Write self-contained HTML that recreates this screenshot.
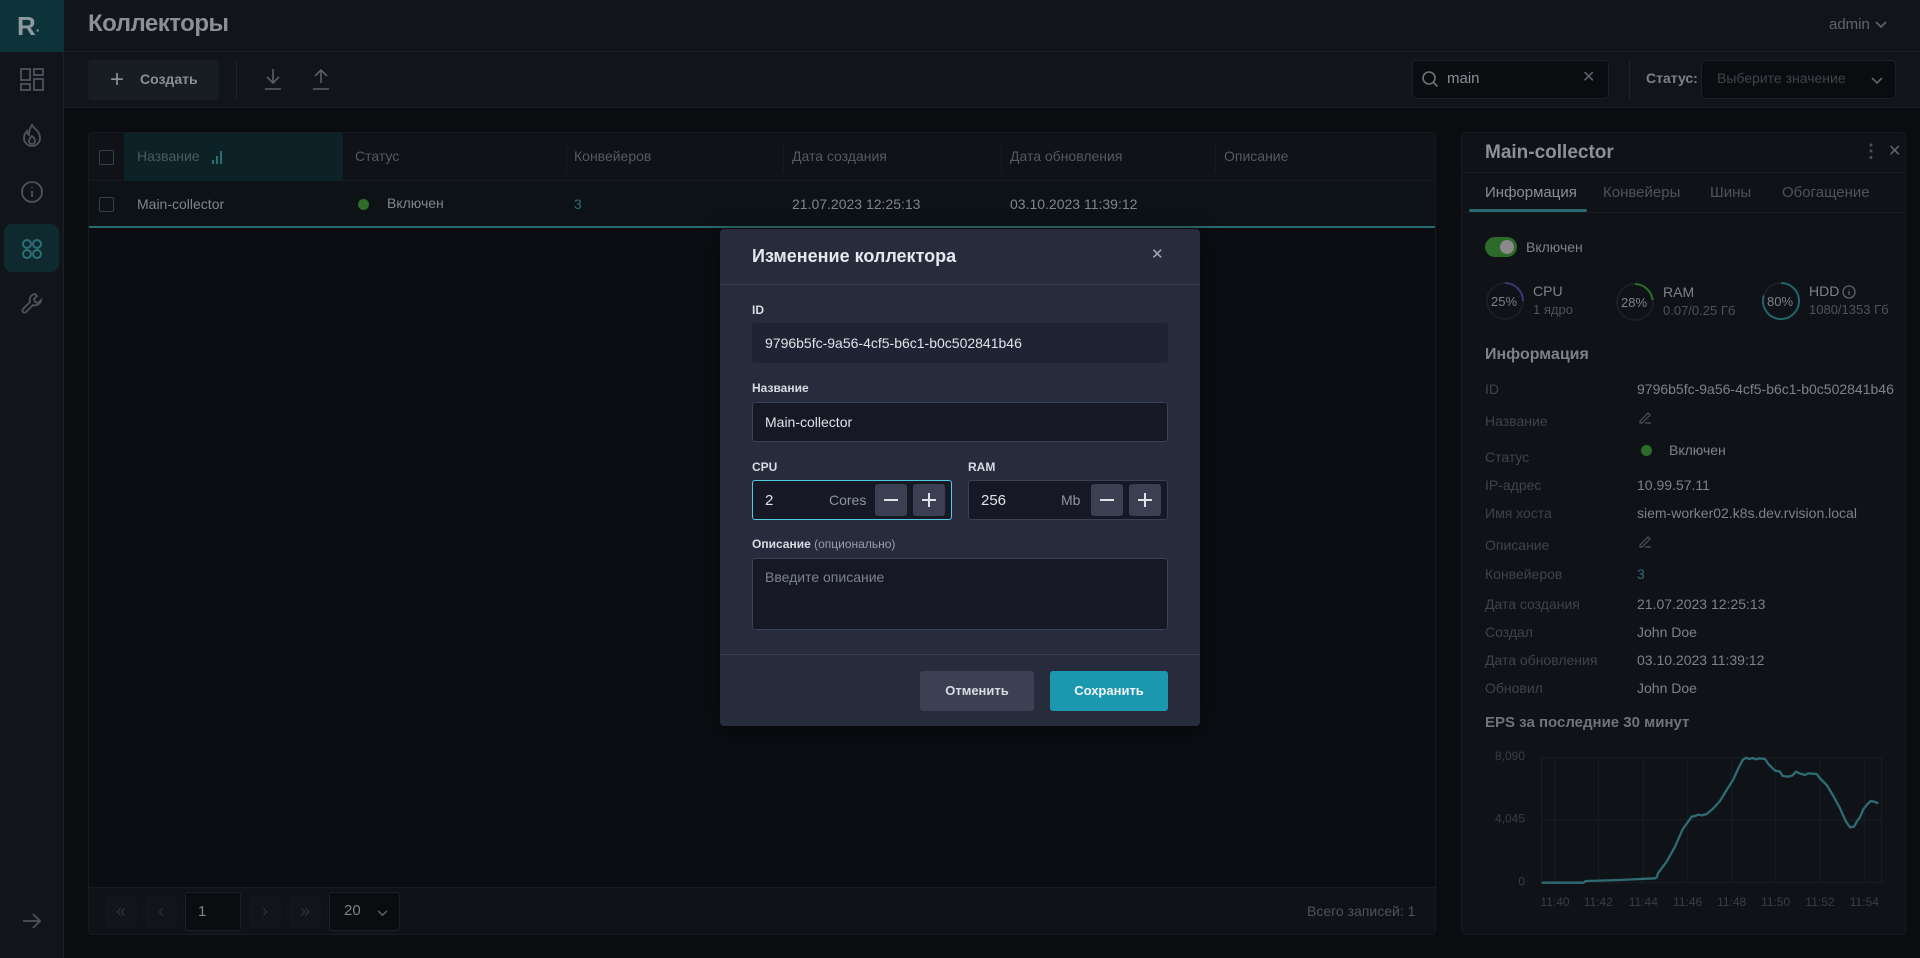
<!DOCTYPE html>
<html><head><meta charset="utf-8"><style>
*{box-sizing:border-box;margin:0;padding:0}
body{width:1920px;height:958px;background:#0a0c10;font-family:"Liberation Sans",sans-serif;position:relative;overflow:hidden;color:#8a8f96}
.a{position:absolute}
.t{position:absolute;white-space:nowrap;line-height:1}
</style></head><body>
<!-- sidebar -->
<div class="a" style="left:0;top:0;width:64px;height:958px;background:#11141a;border-right:1px solid #1a1e25"></div>
<div class="a" style="left:0;top:0;width:64px;height:52px;background:#0c3339"></div>
<div class="t" style="left:17px;top:13px;font-size:26px;font-weight:bold;color:#8d9aa0">R<span style="font-size:14px">·</span></div>
<svg class="a" style="left:20px;top:68px" width="24" height="24" viewBox="0 0 24 24" fill="none" stroke="#4e535a" stroke-width="1.8"><rect x="1" y="1" width="9" height="11"/><rect x="14" y="1" width="9" height="6"/><rect x="1" y="16" width="9" height="6"/><rect x="14" y="11" width="9" height="11"/></svg>
<svg class="a" style="left:21px;top:123px" width="22" height="24" viewBox="0 0 22 24" fill="none" stroke="#4e535a" stroke-width="1.8"><path d="M11 2c2 4 8 6 8 13a8 8 0 0 1-16 0c0-4 2-6 3-7 0 3 2 4 2 4 0-4 1-7 3-10z"/><path d="M11 13c-2 2-3 3-3 5a3 3 0 0 0 6 0c0-2-1-3-3-5z"/></svg>
<svg class="a" style="left:20px;top:180px" width="24" height="24" viewBox="0 0 24 24" fill="none" stroke="#4e535a" stroke-width="1.8"><circle cx="12" cy="12" r="10"/><path d="M12 11v6M12 7v1"/></svg>
<div class="a" style="left:4px;top:224px;width:55px;height:48px;background:#0e2a2f;border-radius:8px"></div>
<svg class="a" style="left:21px;top:238px" width="22" height="22" viewBox="0 0 22 22" fill="none" stroke="#2d6f78" stroke-width="2"><circle cx="6" cy="6" r="4"/><circle cx="16" cy="6" r="4"/><circle cx="6" cy="16" r="4"/><circle cx="16" cy="16" r="4"/></svg>
<svg class="a" style="left:21px;top:292px" width="22" height="22" viewBox="0 0 22 22" fill="none" stroke="#4e535a" stroke-width="1.8"><path d="M14 2a6 6 0 0 0-5 8L2 17a2 2 0 0 0 3 3l7-7a6 6 0 0 0 8-5l-3 3-3-1-1-3 3-3z"/></svg>
<svg class="a" style="left:22px;top:912px" width="20" height="18" viewBox="0 0 20 18" fill="none" stroke="#4e535a" stroke-width="1.8"><path d="M1 9h17M11 2l7 7-7 7"/></svg>
<!-- header -->
<div class="a" style="left:64px;top:0;width:1856px;height:52px;background:#11141a;border-bottom:1px solid #1b1f26"></div>
<div class="t" style="left:88px;top:12px;font-size:24px;color:#8b9096;font-weight:bold;letter-spacing:-0.5px">Коллекторы</div>
<div class="t" style="left:1829px;top:17px;font-size:15px;color:#5f646b">admin</div>
<svg class="a" style="left:1875px;top:21px" width="12" height="8" viewBox="0 0 12 8" fill="none" stroke="#5f646b" stroke-width="1.6"><path d="M1 1l5 5 5-5"/></svg>
<!-- toolbar -->
<div class="a" style="left:64px;top:52px;width:1856px;height:56px;background:#11141a;border-bottom:1px solid #1b1f26"></div>
<div class="a" style="left:88px;top:60px;width:131px;height:40px;background:#181c23;border-radius:4px"></div>
<div class="t" style="left:110px;top:68px;font-size:24px;color:#8a8f96;font-weight:300">+</div>
<div class="t" style="left:140px;top:72px;font-size:14px;color:#8a8f96;font-weight:bold">Создать</div>
<div class="a" style="left:236px;top:60px;width:1px;height:40px;background:#1e222a"></div>
<svg class="a" style="left:263px;top:68px" width="20" height="22" viewBox="0 0 20 22" fill="none" stroke="#5a5f66" stroke-width="1.6"><path d="M10 1v13M4 9l6 6 6-6M2 21h16"/></svg>
<svg class="a" style="left:311px;top:68px" width="20" height="22" viewBox="0 0 20 22" fill="none" stroke="#5a5f66" stroke-width="1.6"><path d="M10 15V2M4 8l6-6 6 6M2 21h16"/></svg>
<div class="a" style="left:1412px;top:60px;width:197px;height:39px;background:#0a0c10;border:1px solid #1b1f26;border-radius:4px"></div>
<svg class="a" style="left:1421px;top:70px" width="18" height="18" viewBox="0 0 18 18" fill="none" stroke="#6f747b" stroke-width="1.6"><circle cx="8" cy="8" r="6"/><path d="M12.5 12.5l4 4"/></svg>
<div class="t" style="left:1447px;top:71px;font-size:15px;color:#8a8f96">main</div>
<div class="t" style="left:1582px;top:70px;font-size:16px;color:#5f646b">✕</div>
<div class="a" style="left:1629px;top:60px;width:1px;height:40px;background:#1e222a"></div>
<div class="t" style="left:1646px;top:71px;font-size:14px;color:#7d8289;font-weight:bold">Статус:</div>
<div class="a" style="left:1701px;top:60px;width:195px;height:39px;background:#0a0c10;border:1px solid #1b1f26;border-radius:4px"></div>
<div class="t" style="left:1717px;top:71px;font-size:14px;color:#3f444b">Выберите значение</div>
<svg class="a" style="left:1871px;top:77px" width="12" height="8" viewBox="0 0 12 8" fill="none" stroke="#5f646b" stroke-width="1.6"><path d="M1 1l5 5 5-5"/></svg>
<!-- table panel -->
<div class="a" style="left:88px;top:132px;width:1348px;height:803px;background:#0b0d12;border:1px solid #171a21;border-radius:4px"></div>
<div class="a" style="left:89px;top:133px;width:1346px;height:48px;background:#0f1217;border-bottom:1px solid #171b21"></div>
<div class="a" style="left:124px;top:133px;width:219px;height:48px;background:#0d2226"></div>
<div class="a" style="left:89px;top:181px;width:1346px;height:47px;background:#0d1217;border-bottom:2px solid #2a6a70"></div>
<div class="a" style="left:99px;top:150px;width:15px;height:15px;border:1.5px solid #3a3e45;border-radius:2px"></div>
<div class="a" style="left:99px;top:197px;width:15px;height:15px;border:1.5px solid #3a3e45;border-radius:2px"></div>
<div class="t" style="left:137px;top:149px;font-size:14px;color:#4c5a5e">Название</div>
<svg class="a" style="left:212px;top:150px" width="12" height="14" viewBox="0 0 12 14" fill="#2b6d74"><rect x="0" y="10" width="2" height="4"/><rect x="4" y="6" width="2" height="8"/><rect x="8" y="1" width="2" height="13"/></svg>
<div class="t" style="left:355px;top:149px;font-size:14px;color:#555a61">Статус</div>
<div class="a" style="left:566px;top:142px;width:1px;height:30px;background:#181c22"></div>
<div class="t" style="left:574px;top:149px;font-size:14px;color:#555a61">Конвейеров</div>
<div class="a" style="left:783px;top:142px;width:1px;height:30px;background:#181c22"></div>
<div class="t" style="left:792px;top:149px;font-size:14px;color:#555a61">Дата создания</div>
<div class="a" style="left:1001px;top:142px;width:1px;height:30px;background:#181c22"></div>
<div class="t" style="left:1010px;top:149px;font-size:14px;color:#555a61">Дата обновления</div>
<div class="a" style="left:1215px;top:142px;width:1px;height:30px;background:#181c22"></div>
<div class="t" style="left:1224px;top:149px;font-size:14px;color:#555a61">Описание</div>
<div class="t" style="left:137px;top:197px;font-size:14px;color:#80858c">Main-collector</div>
<div class="a" style="left:358px;top:199px;width:11px;height:11px;border-radius:50%;background:#2e6b2a"></div>
<div class="t" style="left:387px;top:196px;font-size:14px;color:#80858c">Включен</div>
<div class="t" style="left:574px;top:197px;font-size:14px;color:#2b6d74">3</div>
<div class="t" style="left:792px;top:197px;font-size:14px;color:#80858c">21.07.2023 12:25:13</div>
<div class="t" style="left:1010px;top:197px;font-size:14px;color:#80858c">03.10.2023 11:39:12</div>
<!-- pagination -->
<div class="a" style="left:89px;top:887px;width:1346px;height:47px;background:#0f1217;border-top:1px solid #171b21"></div>
<div class="a" style="left:105px;top:896px;width:32px;height:32px;background:#12151b;border-radius:3px;color:#2e3238;font-size:18px;text-align:center;line-height:30px">«</div>
<div class="a" style="left:145px;top:896px;width:32px;height:32px;background:#12151b;border-radius:3px;color:#2e3238;font-size:18px;text-align:center;line-height:30px">‹</div>
<div class="a" style="left:185px;top:892px;width:56px;height:39px;background:#0a0c10;border:1px solid #1b1f26;border-radius:3px"></div>
<div class="t" style="left:198px;top:904px;font-size:15px;color:#7d8289">1</div>
<div class="a" style="left:249px;top:896px;width:32px;height:32px;background:#12151b;border-radius:3px;color:#2e3238;font-size:18px;text-align:center;line-height:30px">›</div>
<div class="a" style="left:289px;top:896px;width:32px;height:32px;background:#12151b;border-radius:3px;color:#2e3238;font-size:18px;text-align:center;line-height:30px">»</div>
<div class="a" style="left:329px;top:892px;width:71px;height:39px;background:#0a0c10;border:1px solid #1b1f26;border-radius:3px"></div>
<div class="t" style="left:344px;top:903px;font-size:15px;color:#7d8289">20</div>
<svg class="a" style="left:377px;top:910px" width="11" height="7" viewBox="0 0 12 8" fill="none" stroke="#5f646b" stroke-width="1.6"><path d="M1 1l5 5 5-5"/></svg>
<div class="t" style="left:1307px;top:904px;font-size:14px;color:#4e535a">Всего записей: 1</div>
<!-- right panel -->
<div class="a" style="left:1461px;top:132px;width:445px;height:803px;background:#0f1217;border:1px solid #171a21;border-radius:4px"></div>
<div class="t" style="left:1485px;top:143px;font-size:19px;color:#8d9197;font-weight:bold">Main-collector</div>
<div class="t" style="left:1862px;top:142px;font-size:18px;color:#4e535a;font-weight:bold">⋮</div>
<div class="t" style="left:1888px;top:144px;font-size:16px;color:#5f646b">✕</div>
<div class="a" style="left:1462px;top:172px;width:444px;height:1px;background:#181b22"></div>
<div class="a" style="left:1462px;top:212px;width:444px;height:1px;background:#181b22"></div>
<div class="t" style="left:1485px;top:185px;font-size:15px;color:#8a8f96">Информация</div>
<div class="t" style="left:1603px;top:185px;font-size:15px;color:#4e535a">Конвейеры</div>
<div class="t" style="left:1710px;top:185px;font-size:15px;color:#4e535a">Шины</div>
<div class="t" style="left:1782px;top:185px;font-size:15px;color:#4e535a">Обогащение</div>
<div class="a" style="left:1469px;top:209px;width:118px;height:3px;background:#2a6a70;border-radius:2px"></div>
<div class="a" style="left:1485px;top:237px;width:32px;height:20px;background:#2e6b2a;border-radius:10px"></div>
<div class="a" style="left:1500px;top:240px;width:14px;height:14px;background:#8a8a8a;border-radius:50%"></div>
<div class="t" style="left:1526px;top:240px;font-size:14px;color:#7d8289">Включен</div>
<svg class="a" style="left:1485px;top:281px" width="40" height="40" viewBox="0 0 40 40" fill="none" stroke-width="2"><circle cx="20" cy="20" r="18" stroke="#1b1e26"/><path d="M20 2a18 18 0 0 1 18 18" stroke="#3d3577"/></svg>
<div class="t" style="left:1491px;top:295px;font-size:13px;color:#7d8289">25%</div>
<div class="t" style="left:1533px;top:284px;font-size:14px;color:#7d8289">CPU</div>
<div class="t" style="left:1533px;top:303px;font-size:13px;color:#4e535a">1 ядро</div>
<svg class="a" style="left:1615px;top:282px" width="40" height="40" viewBox="0 0 40 40" fill="none" stroke-width="2"><circle cx="20" cy="20" r="18" stroke="#1b1e26"/><path d="M20 2a18 18 0 0 1 17.5 16" stroke="#2e6b2a"/></svg>
<div class="t" style="left:1621px;top:296px;font-size:13px;color:#7d8289">28%</div>
<div class="t" style="left:1663px;top:285px;font-size:14px;color:#7d8289">RAM</div>
<div class="t" style="left:1663px;top:304px;font-size:13px;color:#4e535a">0.07/0.25 Гб</div>
<svg class="a" style="left:1761px;top:281px" width="40" height="40" viewBox="0 0 40 40" fill="none" stroke-width="2"><circle cx="20" cy="20" r="18" stroke="#1b1e26"/><path d="M20 2A18 18 0 1 1 2.9 14.4" stroke="#23636a"/></svg>
<div class="t" style="left:1767px;top:295px;font-size:13px;color:#7d8289">80%</div>
<div class="t" style="left:1809px;top:284px;font-size:14px;color:#7d8289">HDD</div>
<svg class="a" style="left:1842px;top:285px" width="14" height="14" viewBox="0 0 14 14" fill="none" stroke="#5f646b" stroke-width="1.3"><circle cx="7" cy="7" r="6"/><path d="M7 6v4M7 4v.5"/></svg>
<div class="t" style="left:1809px;top:303px;font-size:13px;color:#4e535a">1080/1353 Гб</div>
<div class="t" style="left:1485px;top:347px;font-size:16px;color:#7d8289;font-weight:bold">Информация</div>
<div class="t" style="left:1485px;top:382px;font-size:14px;color:#3f444b">ID</div><div class="t" style="left:1637px;top:382px;font-size:14px;color:#7d8289">9796b5fc-9a56-4cf5-b6c1-b0c502841b46</div>
<div class="t" style="left:1485px;top:414px;font-size:14px;color:#3f444b">Название</div>
<svg class="a" style="left:1638px;top:410px" width="14" height="14" viewBox="0 0 14 14" fill="none" stroke="#4e535a" stroke-width="1.2"><path d="M2 11l8-8 2 2-8 8H2zM7 13h6"/></svg>
<div class="t" style="left:1485px;top:450px;font-size:14px;color:#3f444b">Статус</div>
<div class="a" style="left:1641px;top:445px;width:11px;height:11px;border-radius:50%;background:#2e6b2a"></div>
<div class="t" style="left:1669px;top:443px;font-size:14px;color:#7d8289">Включен</div>
<div class="t" style="left:1485px;top:478px;font-size:14px;color:#3f444b">IP-адрес</div><div class="t" style="left:1637px;top:478px;font-size:14px;color:#7d8289">10.99.57.11</div>
<div class="t" style="left:1485px;top:506px;font-size:14px;color:#3f444b">Имя хоста</div><div class="t" style="left:1637px;top:506px;font-size:14px;color:#7d8289">siem-worker02.k8s.dev.rvision.local</div>
<div class="t" style="left:1485px;top:538px;font-size:14px;color:#3f444b">Описание</div>
<svg class="a" style="left:1638px;top:534px" width="14" height="14" viewBox="0 0 14 14" fill="none" stroke="#4e535a" stroke-width="1.2"><path d="M2 11l8-8 2 2-8 8H2zM7 13h6"/></svg>
<div class="t" style="left:1485px;top:567px;font-size:14px;color:#3f444b">Конвейеров</div><div class="t" style="left:1637px;top:567px;font-size:14px;color:#2b6d74">3</div>
<div class="t" style="left:1485px;top:597px;font-size:14px;color:#3f444b">Дата создания</div><div class="t" style="left:1637px;top:597px;font-size:14px;color:#7d8289">21.07.2023 12:25:13</div>
<div class="t" style="left:1485px;top:625px;font-size:14px;color:#3f444b">Создал</div><div class="t" style="left:1637px;top:625px;font-size:14px;color:#7d8289">John Doe</div>
<div class="t" style="left:1485px;top:653px;font-size:14px;color:#3f444b">Дата обновления</div><div class="t" style="left:1637px;top:653px;font-size:14px;color:#7d8289">03.10.2023 11:39:12</div>
<div class="t" style="left:1485px;top:681px;font-size:14px;color:#3f444b">Обновил</div><div class="t" style="left:1637px;top:681px;font-size:14px;color:#7d8289">John Doe</div>
<div class="t" style="left:1485px;top:715px;font-size:15px;color:#6f747b;font-weight:bold">EPS за последние 30 минут</div>
<svg class="a" style="left:1460px;top:690px" width="460" height="268" viewBox="0 0 1380 804">
<g stroke="#1a1e25" stroke-width="3" fill="none">
<path d="M245 203H1265M245 390H1265M245 578H1265M245 203V578M1265 203V578M285 203V578M415 203V578M550 203V578M683 203V578M815 203V578M947 203V578M1080 203V578M1213 203V578"/></g>
<g font-family="Liberation Sans" font-size="36" fill="#3a3e45">
<text x="195" y="210" text-anchor="end">8,090</text><text x="195" y="397" text-anchor="end">4,045</text><text x="195" y="586" text-anchor="end">0</text>
<text x="285" y="648" text-anchor="middle">11:40</text><text x="415" y="648" text-anchor="middle">11:42</text><text x="550" y="648" text-anchor="middle">11:44</text><text x="683" y="648" text-anchor="middle">11:46</text><text x="815" y="648" text-anchor="middle">11:48</text><text x="947" y="648" text-anchor="middle">11:50</text><text x="1080" y="648" text-anchor="middle">11:52</text><text x="1213" y="648" text-anchor="middle">11:54</text></g>
<path fill="none" stroke="#2e6b72" stroke-width="7" stroke-linejoin="round" d="M245,578 L370,578 L378,573 L480,570 L585,565 L590,562 L595,548 L620,515 L645,470 L668,418 L695,380 L705,378 L715,374 L725,376 L740,372 L760,355 L780,333 L800,300 L820,268 L835,235 L848,210 L858,203 L868,207 L878,204 L888,208 L898,205 L915,207 L925,222 L945,242 L960,245 L968,258 L985,260 L998,256 L1008,245 L1018,250 L1035,255 L1045,250 L1070,252 L1080,265 L1100,285 L1120,318 L1140,355 L1158,395 L1170,412 L1182,410 L1192,392 L1200,382 L1210,358 L1222,343 L1232,333 L1242,335 L1255,340"/>
</svg>
<!-- modal -->
<div class="a" style="left:720px;top:229px;width:480px;height:497px;background:#272c3d;border-radius:4px;box-shadow:0 4px 20px rgba(0,0,0,.5)"></div>
<div class="t" style="left:752px;top:247px;font-size:18px;color:#e6e8ee;font-weight:bold">Изменение коллектора</div>
<div class="t" style="left:1151px;top:247px;font-size:15px;color:#a6aab4">✕</div>
<div class="a" style="left:720px;top:284px;width:480px;height:1px;background:#373d50"></div>
<div class="t" style="left:752px;top:304px;font-size:12px;color:#d8dbe2;font-weight:bold">ID</div>
<div class="a" style="left:752px;top:323px;width:416px;height:40px;background:#1f2333;border-radius:3px"></div>
<div class="t" style="left:765px;top:336px;font-size:14px;color:#e0e2e8">9796b5fc-9a56-4cf5-b6c1-b0c502841b46</div>
<div class="t" style="left:752px;top:382px;font-size:12px;color:#d8dbe2;font-weight:bold">Название</div>
<div class="a" style="left:752px;top:402px;width:416px;height:40px;background:#161925;border:1px solid #3a4055;border-radius:3px"></div>
<div class="t" style="left:765px;top:415px;font-size:14px;color:#e0e2e8">Main-collector</div>
<div class="t" style="left:752px;top:461px;font-size:12px;color:#d8dbe2;font-weight:bold">CPU</div>
<div class="a" style="left:752px;top:480px;width:200px;height:40px;background:#161925;border:1px solid #52cde0;border-radius:3px"></div>
<div class="t" style="left:765px;top:493px;font-size:15px;color:#e0e2e8">2</div>
<div class="t" style="left:829px;top:493px;font-size:14px;color:#8f94a3">Cores</div>
<div class="a" style="left:875px;top:484px;width:32px;height:32px;background:#3a3f51;border-radius:3px"></div>
<div class="a" style="left:884px;top:499px;width:14px;height:2px;background:#e0e2e8"></div>
<div class="a" style="left:913px;top:484px;width:32px;height:32px;background:#3a3f51;border-radius:3px"></div>
<div class="a" style="left:922px;top:499px;width:14px;height:2px;background:#e0e2e8"></div><div class="a" style="left:928px;top:493px;width:2px;height:14px;background:#e0e2e8"></div>
<div class="t" style="left:968px;top:461px;font-size:12px;color:#d8dbe2;font-weight:bold">RAM</div>
<div class="a" style="left:968px;top:480px;width:200px;height:40px;background:#161925;border:1px solid #3a4055;border-radius:3px"></div>
<div class="t" style="left:981px;top:493px;font-size:15px;color:#e0e2e8">256</div>
<div class="t" style="left:1061px;top:493px;font-size:14px;color:#8f94a3">Mb</div>
<div class="a" style="left:1091px;top:484px;width:32px;height:32px;background:#3a3f51;border-radius:3px"></div>
<div class="a" style="left:1100px;top:499px;width:14px;height:2px;background:#e0e2e8"></div>
<div class="a" style="left:1129px;top:484px;width:32px;height:32px;background:#3a3f51;border-radius:3px"></div>
<div class="a" style="left:1138px;top:499px;width:14px;height:2px;background:#e0e2e8"></div><div class="a" style="left:1144px;top:493px;width:2px;height:14px;background:#e0e2e8"></div>
<div class="t" style="left:752px;top:538px;font-size:12px;color:#d8dbe2"><b>Описание</b> <span style="color:#9a9eab">(опционально)</span></div>
<div class="a" style="left:752px;top:558px;width:416px;height:72px;background:#161925;border:1px solid #3a4055;border-radius:3px"></div>
<div class="t" style="left:765px;top:570px;font-size:14px;color:#7c8190">Введите описание</div>
<div class="a" style="left:720px;top:654px;width:480px;height:1px;background:#373d50"></div>
<div class="a" style="left:920px;top:671px;width:114px;height:40px;background:#3b4052;border-radius:3px;color:#d8dbe2;font-size:13px;font-weight:bold;text-align:center;line-height:40px">Отменить</div>
<div class="a" style="left:1050px;top:671px;width:118px;height:40px;background:#1b98b0;border-radius:3px;color:#f2f4f7;font-size:13px;font-weight:bold;text-align:center;line-height:40px">Сохранить</div>
</body></html>
